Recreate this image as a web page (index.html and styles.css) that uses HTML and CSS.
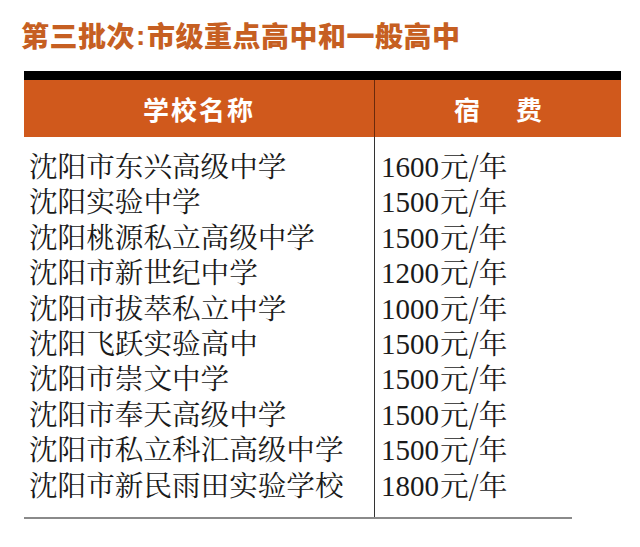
FILE: index.html
```html
<!DOCTYPE html>
<html lang="zh-CN">
<head>
<meta charset="utf-8">
<link rel="stylesheet" href="styles.css">
</head>
<body>
<div class="page">
  <h1 class="title">第三批次<span class="colon">:</span>市级重点高中和一般高中</h1>
  <div class="table">
    <div class="topbar"></div>
    <div class="head">
      <div class="hcell">学校名称</div>
      <div class="hcell hright"><span>宿</span><span>费</span></div>
    </div>
    <div class="rows">
      <div class="names">
        <div class="line">沈阳市东兴高级中学</div>
        <div class="line">沈阳实验中学</div>
        <div class="line">沈阳桃源私立高级中学</div>
        <div class="line">沈阳市新世纪中学</div>
        <div class="line">沈阳市拔萃私立中学</div>
        <div class="line">沈阳飞跃实验高中</div>
        <div class="line">沈阳市崇文中学</div>
        <div class="line">沈阳市奉天高级中学</div>
        <div class="line">沈阳市私立科汇高级中学</div>
        <div class="line">沈阳市新民雨田实验学校</div>
      </div>
      <div class="fees">
        <div class="line"><span class="num">1600</span>元/年</div>
        <div class="line"><span class="num">1500</span>元/年</div>
        <div class="line"><span class="num">1500</span>元/年</div>
        <div class="line"><span class="num">1200</span>元/年</div>
        <div class="line"><span class="num">1000</span>元/年</div>
        <div class="line"><span class="num">1500</span>元/年</div>
        <div class="line"><span class="num">1500</span>元/年</div>
        <div class="line"><span class="num">1500</span>元/年</div>
        <div class="line"><span class="num">1500</span>元/年</div>
        <div class="line"><span class="num">1800</span>元/年</div>
      </div>
    </div>
    <div class="rule"></div>
  </div>
</div>
</body>
</html>
```
FILE: styles.css
```css
html, body {
  margin: 0;
  padding: 0;
  background: #ffffff;
}
.page {
  width: 640px;
  height: 547px;
  overflow: hidden;
}
.title {
  margin: 0;
  padding: 18px 0 0 21px;
  height: 35px;
  font-family: "Noto Sans CJK SC", sans-serif;
  font-weight: 900;
  font-size: 28px;
  line-height: 35px;
  color: #c65f22;
  letter-spacing: 0.5px;
}
.colon {
  display: inline-block;
  width: 12px;
  text-align: center;
  font-family: "Liberation Sans", sans-serif;
  font-weight: 700;
  position: relative;
  top: -2px;
}
.table {
  margin: 18px 0 0 24px;
  width: 597px;
}
.topbar {
  height: 9px;
  background: #000000;
}
.head {
  display: grid;
  grid-template-columns: 350px 247px;
  height: 57px;
  background: #d0591c;
}
.hcell {
  display: flex;
  align-items: center;
  justify-content: center;
  font-family: "Noto Sans CJK SC", sans-serif;
  font-weight: 700;
  font-size: 26px;
  color: #ffffff;
  letter-spacing: 2px;
}
.hright {
  border-left: 1px solid #6a2a0c;
  gap: 36px;
  letter-spacing: 0;
}
.rows {
  display: grid;
  grid-template-columns: 350px 247px;
}
.names {
  padding: 10px 0 16px 5px;
}
.fees {
  border-left: 1px solid #333333;
  padding: 10px 0 16px 6px;
}
.line {
  height: 35.4px;
  line-height: 35.4px;
  font-family: "Noto Serif CJK SC", "Noto Sans CJK SC", serif;
  font-size: 28.6px;
  color: #1a1a1a;
  white-space: nowrap;
}
.num {
  font-family: "Liberation Serif", serif;
  font-size: 29px;
  margin-right: 1px;
}
.rule {
  width: 548px;
  height: 2px;
  background: #8a8a8a;
}
```
